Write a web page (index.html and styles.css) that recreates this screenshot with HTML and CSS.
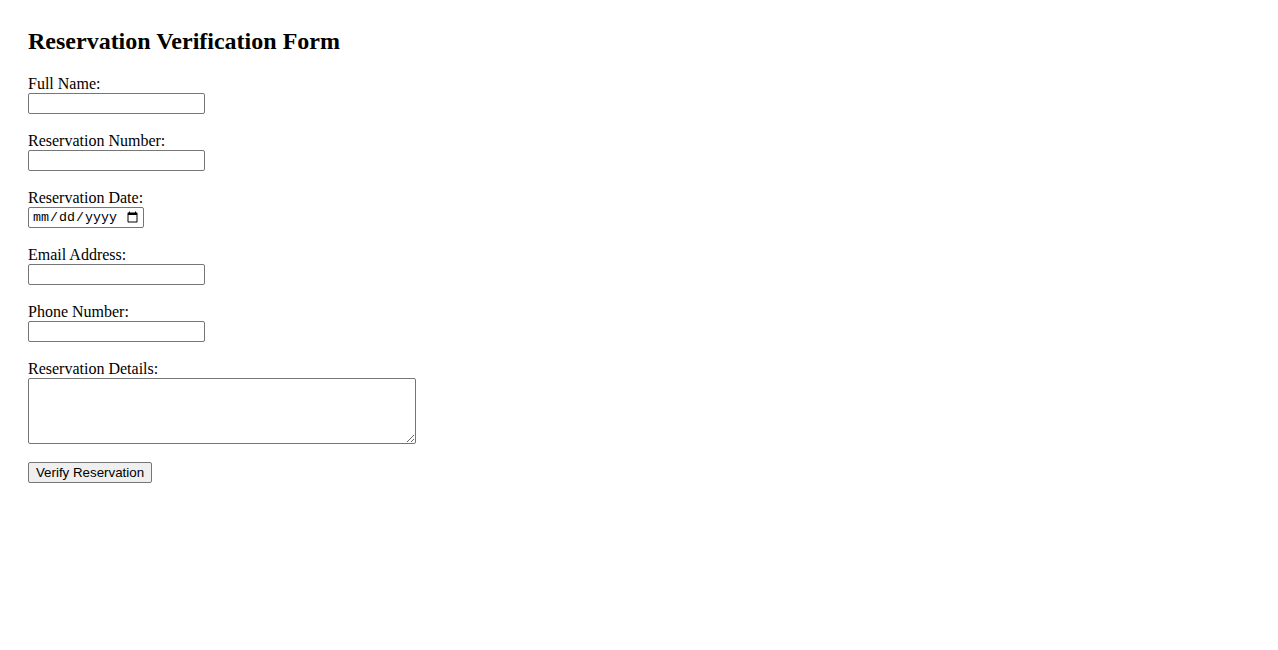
FILE: index.html
```html
<!DOCTYPE html>
<html>
<head>
<meta charset="utf-8">
<title>Reservation Verification Form</title>
<link rel="stylesheet" href="styles.css">
</head>
<body>
<div class="page">
  <h2 class="title">Reservation Verification Form</h2>
  <form class="form">
    <div class="field">
      <label class="label" for="name">Full Name:</label>
      <input class="text-input" type="text" id="name">
    </div>
    <div class="field">
      <label class="label" for="number">Reservation Number:</label>
      <input class="text-input" type="text" id="number">
    </div>
    <div class="field">
      <label class="label" for="date">Reservation Date:</label>
      <input class="date-input" type="date" id="date">
    </div>
    <div class="field">
      <label class="label" for="email">Email Address:</label>
      <input class="text-input" type="email" id="email">
    </div>
    <div class="field">
      <label class="label" for="phone">Phone Number:</label>
      <input class="text-input" type="tel" id="phone">
    </div>
    <div class="field">
      <label class="label" for="details">Reservation Details:</label>
      <textarea class="textarea" id="details"></textarea>
    </div>
    <button class="button" type="submit">Verify Reservation</button>
  </form>
</div>
</body>
</html>
```
FILE: styles.css
```css
html, body {
  background: #ffffff;
}
body {
  margin: 0;
  font-family: "Liberation Serif", "Times New Roman", serif;
  font-size: 16px;
  color: #000;
}
.page {
  padding: 27px 28px 28px 28px;
}
.title {
  margin: 0 0 20px 0;
  font-size: 24px;
  line-height: 28px;
  font-weight: bold;
}
.form {
  display: flex;
  flex-direction: column;
  align-items: flex-start;
}
.field {
  display: flex;
  flex-direction: column;
  align-items: flex-start;
  margin-bottom: 18px;
}
.label {
  line-height: 18px;
}
.text-input,
.date-input,
.textarea {
  box-sizing: border-box;
  border: 1px solid #767676;
  border-radius: 2px;
  background: #fff;
  margin: 0;
}
.text-input {
  width: 177px;
  height: 21px;
  padding: 1px 2px;
  font-family: "Liberation Sans", Arial, sans-serif;
  font-size: 13.33px;
}
.date-input {
  width: 116px;
  height: 21px;
  padding: 1px 2px 1px 3px;
  font-family: "Liberation Mono", "DejaVu Sans Mono", monospace;
  font-size: 13.33px;
}
.textarea {
  width: 388px;
  height: 66px;
  padding: 2px;
  font-family: "Liberation Mono", monospace;
  font-size: 13.33px;
}
.button {
  box-sizing: border-box;
  height: 21px;
  width: 124px;
  padding: 1px 6px;
  margin: 0;
  font-family: "Liberation Sans", Arial, sans-serif;
  font-size: 13.33px;
  color: #000;
  background: #efefef;
  border: 1px solid #767676;
  border-radius: 2px;
}
```
